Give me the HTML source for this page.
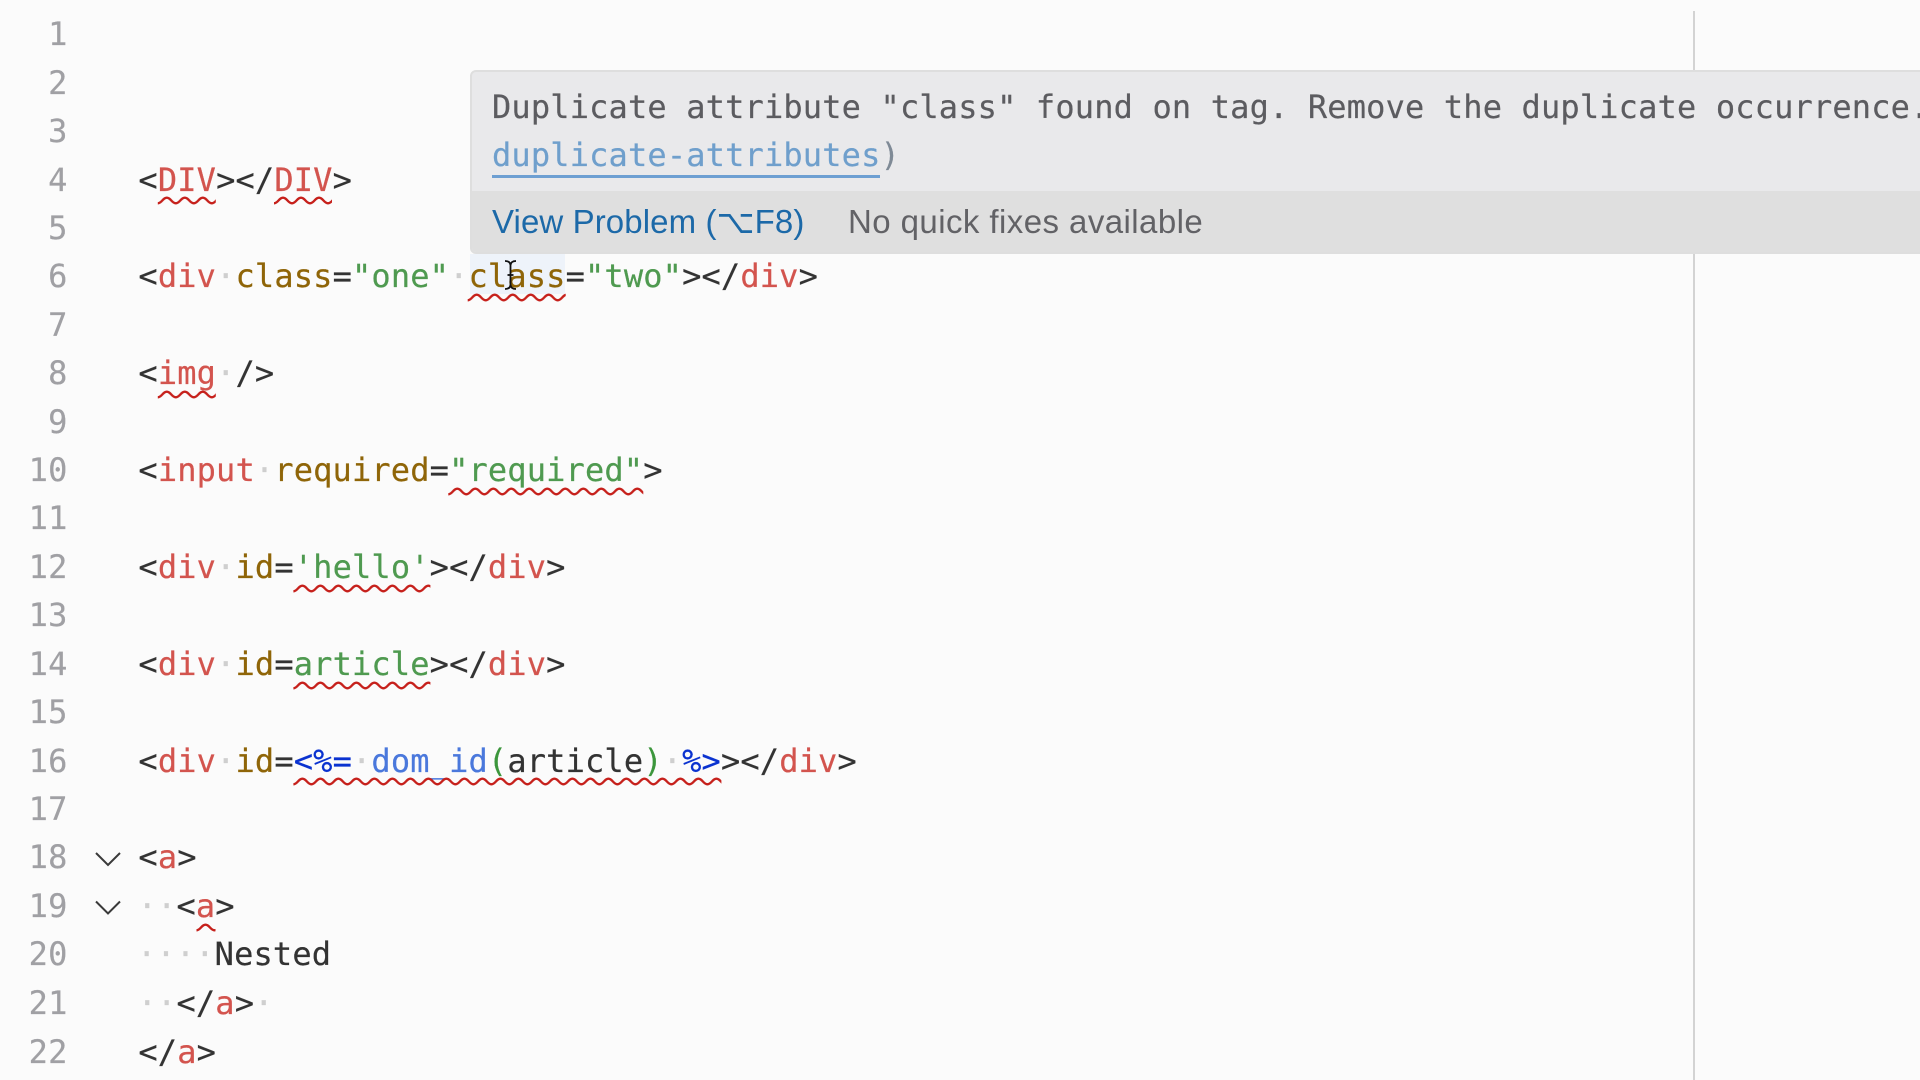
<!DOCTYPE html>
<html><head><meta charset="utf-8"><style>
html,body{margin:0;padding:0;width:1920px;height:1080px;overflow:hidden;background:#fbfbfb}
body{position:relative;font-family:"DejaVu Sans Mono","Liberation Mono",monospace;font-size:32px;letter-spacing:.15px;color:#333;-webkit-text-stroke:.2px}
.l,.n{position:absolute;height:48px;line-height:48px;white-space:pre}
.l{left:138.4px}
.n{left:0;width:67.5px;text-align:right;color:#a0a0a4}
i{font-style:normal;color:#cfcfcf}
.t{color:#d3544e}.a{color:#8f6508}.s{color:#4f9a50}.e{color:#0a32d0}.f{color:#4a78dc}.p{color:#3c963c}
#vr{position:absolute;left:1693px;top:11px;width:2px;height:1069px;background:#d3d3d3}
#hl{position:absolute;left:470px;top:254px;width:95px;height:40px;background:#eef3fa}
#tip{position:absolute;left:470px;top:70px;width:1460px;height:184px;box-sizing:border-box;background:#e9e9eb;border:2px solid #dedede;border-radius:6px 0 0 6px;overflow:hidden}
#foot{position:absolute;left:0;right:0;top:119px;height:63px;background:#dfdfdf}
.m{position:absolute;left:20px;height:48px;line-height:48px;white-space:pre;color:#5c5c60;letter-spacing:.16px}
.ft{position:absolute;top:0;height:61px;line-height:61px;font-family:"Liberation Sans","DejaVu Sans",sans-serif;font-size:33px;letter-spacing:.43px;white-space:pre;-webkit-text-stroke:0}
svg{position:absolute;left:0;top:0}
</style></head><body>
<div id="vr"></div>
<div id="hl"></div>
<div class="n" style="top:10px">1</div>
<div class="n" style="top:58.5px">2</div>
<div class="n" style="top:107px">3</div>
<div class="n" style="top:156px">4</div>
<div class="n" style="top:204px">5</div>
<div class="n" style="top:252.3px">6</div>
<div class="n" style="top:301px">7</div>
<div class="n" style="top:349.2px">8</div>
<div class="n" style="top:398px">9</div>
<div class="n" style="top:446.1px">10</div>
<div class="n" style="top:494px">11</div>
<div class="n" style="top:543px">12</div>
<div class="n" style="top:591.4px">13</div>
<div class="n" style="top:639.9px">14</div>
<div class="n" style="top:688.3px">15</div>
<div class="n" style="top:736.8px">16</div>
<div class="n" style="top:785.2px">17</div>
<div class="n" style="top:833px">18</div>
<div class="n" style="top:882.1px">19</div>
<div class="n" style="top:930px">20</div>
<div class="n" style="top:979px">21</div>
<div class="n" style="top:1027.5px">22</div>

<div class="l" style="top:156px">&lt;<span class="t">DIV</span>&gt;&lt;/<span class="t">DIV</span>&gt;</div>
<div class="l" style="top:252.3px">&lt;<span class="t">div</span><i>·</i><span class="a">class</span>=<span class="s">"one"</span><i>·</i><span class="a">class</span>=<span class="s">"two"</span>&gt;&lt;/<span class="t">div</span>&gt;</div>
<div class="l" style="top:349.2px">&lt;<span class="t">img</span><i>·</i>/&gt;</div>
<div class="l" style="top:446.1px">&lt;<span class="t">input</span><i>·</i><span class="a">required</span>=<span class="s">"required"</span>&gt;</div>
<div class="l" style="top:543px">&lt;<span class="t">div</span><i>·</i><span class="a">id</span>=<span class="s">'hello'</span>&gt;&lt;/<span class="t">div</span>&gt;</div>
<div class="l" style="top:639.9px">&lt;<span class="t">div</span><i>·</i><span class="a">id</span>=<span class="s">article</span>&gt;&lt;/<span class="t">div</span>&gt;</div>
<div class="l" style="top:736.8px">&lt;<span class="t">div</span><i>·</i><span class="a">id</span>=<span class="e">&lt;%=</span><i>·</i><span class="f">dom_id</span><span class="p">(</span>article<span class="p">)</span><i>·</i><span class="e">%&gt;</span>&gt;&lt;/<span class="t">div</span>&gt;</div>
<div class="l" style="top:833px">&lt;<span class="t">a</span>&gt;</div>
<div class="l" style="top:882.1px;left:137.6px"><i>··</i>&lt;<span class="t">a</span>&gt;</div>
<div class="l" style="top:930px;left:137px"><i>····</i>Nested</div>
<div class="l" style="top:979px;left:137.6px"><i>··</i>&lt;/<span class="t">a</span>&gt;<i>·</i></div>
<div class="l" style="top:1027.5px">&lt;/<span class="t">a</span>&gt;</div>

<svg width="1920" height="1080" viewBox="0 0 1920 1080">
<defs><pattern id="w" patternUnits="userSpaceOnUse" width="18" height="9"><path d="M-1 7 L0 7.300 Q2 7.300 4.500 4.500 Q7 1.700 9 1.700 Q11 1.700 13.500 4.500 Q16 7.300 18 7.300 L19 7" fill="none" stroke="#c6201b" stroke-width="2.400"/></pattern></defs>
<rect transform="translate(157.8,196)" width="58" height="9" fill="url(#w)"/>
<rect transform="translate(274,196)" width="58" height="9" fill="url(#w)"/>
<rect transform="translate(467.700,293)" width="98" height="9" fill="url(#w)"/>
<rect transform="translate(157.8,390)" width="58" height="9" fill="url(#w)"/>
<rect transform="translate(448.300,487)" width="195" height="9" fill="url(#w)"/>
<rect transform="translate(293.400,584)" width="137" height="9" fill="url(#w)"/>
<rect transform="translate(293.400,681)" width="137" height="9" fill="url(#w)"/>
<rect transform="translate(293.400,777)" width="428" height="9" fill="url(#w)"/>
<rect transform="translate(196.500,923)" width="19" height="9" fill="url(#w)"/>
<path d="M96 853 L108 865 L120 853" fill="none" stroke="#3a3a3a" stroke-width="2"/>
<path d="M96 901.500 L108 913.500 L120 901.500" fill="none" stroke="#3a3a3a" stroke-width="2"/>
<g fill="none" stroke="#111" stroke-width="1.800">
<path d="M505 261 Q510 261 510.500 265 L510.500 285 Q510 289 505 289"/>
<path d="M516 261 Q511 261 510.500 265 M510.500 285 Q511 289 516 289"/>
<path d="M507.500 275 L513.500 275"/>
</g>
</svg>

<div id="tip">
<div class="m" style="top:10.600px">Duplicate attribute "class" found on tag. Remove the duplicate occurrence.</div>
<div class="m" style="top:58.600px"><span style="color:#6f9fcc">duplicate-attributes</span><span style="color:#7f8a96">)</span></div>
<div style="position:absolute;left:20px;top:102.500px;width:388px;height:3px;background:#6d9fd2"></div>
<div id="foot">
<span class="ft" style="left:20px;color:#1c69a8;letter-spacing:.1px">View Problem (⌥F8)</span>
<span class="ft" style="left:376px;color:#626266">No quick fixes available</span>
</div>
</div>
</body></html>
